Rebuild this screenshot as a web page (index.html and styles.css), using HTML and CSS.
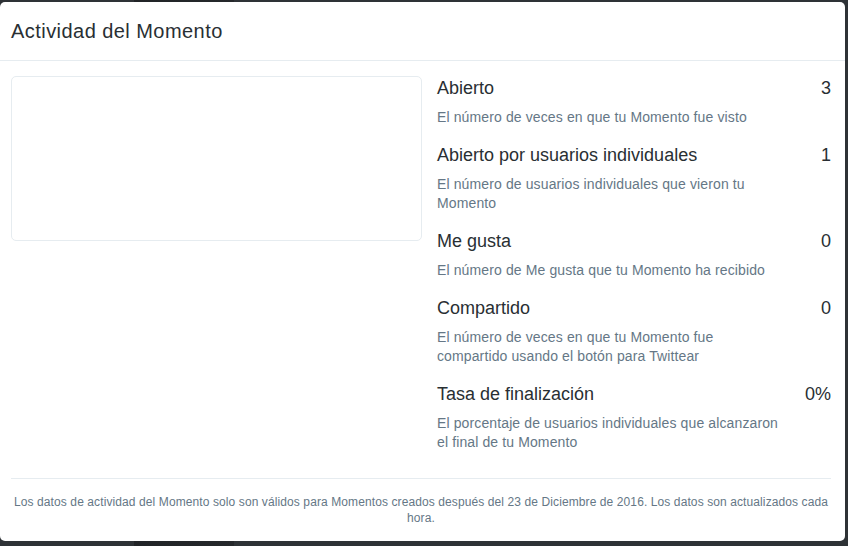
FILE: index.html
```html
<!DOCTYPE html>
<html>
<head>
    <meta charset="utf-8">
    <link rel="stylesheet" href="styles.css">
</head>
<body>

<div class="modal">
    <div class="modal-header">
        <h2 class="modal-title">Actividad del Momento</h2>
    </div>

    <div class="modal-body">
        <div class="preview"></div>

        <ul class="stats">
            <li class="stat">
                <div class="stat-head">
                    <span class="stat-label">Abierto</span>
                    <span class="stat-value">3</span>
                </div>
                <p class="stat-desc">El número de veces en que tu Momento fue visto</p>
            </li>
            <li class="stat">
                <div class="stat-head">
                    <span class="stat-label">Abierto por usuarios individuales</span>
                    <span class="stat-value">1</span>
                </div>
                <p class="stat-desc">El número de usuarios individuales que vieron tu Momento</p>
            </li>
            <li class="stat">
                <div class="stat-head">
                    <span class="stat-label">Me gusta</span>
                    <span class="stat-value">0</span>
                </div>
                <p class="stat-desc">El número de Me gusta que tu Momento ha recibido</p>
            </li>
            <li class="stat">
                <div class="stat-head">
                    <span class="stat-label">Compartido</span>
                    <span class="stat-value">0</span>
                </div>
                <p class="stat-desc">El número de veces en que tu Momento fue compartido usando el botón para Twittear</p>
            </li>
            <li class="stat">
                <div class="stat-head">
                    <span class="stat-label">Tasa de finalización</span>
                    <span class="stat-value">0%</span>
                </div>
                <p class="stat-desc">El porcentaje de usuarios individuales que alcanzaron el final de tu Momento</p>
            </li>
        </ul>
    </div>

    <div class="modal-footer">
        Los datos de actividad del Momento solo son válidos para Momentos creados después del 23 de Diciembre de 2016. Los datos son actualizados cada hora.
    </div>
</div>

</body>
</html>
```

FILE: styles.css
```css
* {
    box-sizing: border-box;
}

body {
    margin: 0;
    padding-top: 2px;
    height: 546px;
    overflow: hidden;
    font-family: "Liberation Sans", Arial, sans-serif;
    background: linear-gradient(to right, #2e3236 134px, #212427 134px, #25282b 234px, #2e3236 234px);
}

.modal {
    width: 845px;
    height: 539px;
    background-color: #fff;
    border-radius: 5px;
    padding: 0 14px 0 11px;
}

.modal-header {
    padding: 15px 0 15px 11px;
    margin: 0 -14px 0 -11px;
    border-bottom: 1px solid #e6ecf0;
}

.modal-title {
    margin: 0;
    font-size: 20px;
    font-weight: normal;
    letter-spacing: 0.45px;
    line-height: 28px;
    color: #292f33;
}

.modal-body {
    display: flex;
    gap: 15px;
    padding: 15px 0 26px;
    border-bottom: 1px solid #e6ecf0;
}

.preview {
    flex: none;
    width: 411px;
    height: 165px;
    border: 1px solid #e6ecf0;
    border-radius: 5px;
}

.stats {
    flex: 1;
    list-style: none;
    margin: 0;
    padding: 0;
}

.stat + .stat {
    margin-top: 16px;
}

.stat-head {
    display: flex;
    justify-content: space-between;
    font-size: 18px;
    line-height: 24px;
    color: #292f33;
}

.stat-desc {
    max-width: 346px;
    margin: 8px 0 0;
    font-size: 14px;
    letter-spacing: 0.12px;
    line-height: 19px;
    color: #657786;
}

.modal-footer {
    padding: 15px 0;
    font-size: 12px;
    letter-spacing: 0.1px;
    line-height: 16px;
    text-align: center;
    color: #657786;
}
```
